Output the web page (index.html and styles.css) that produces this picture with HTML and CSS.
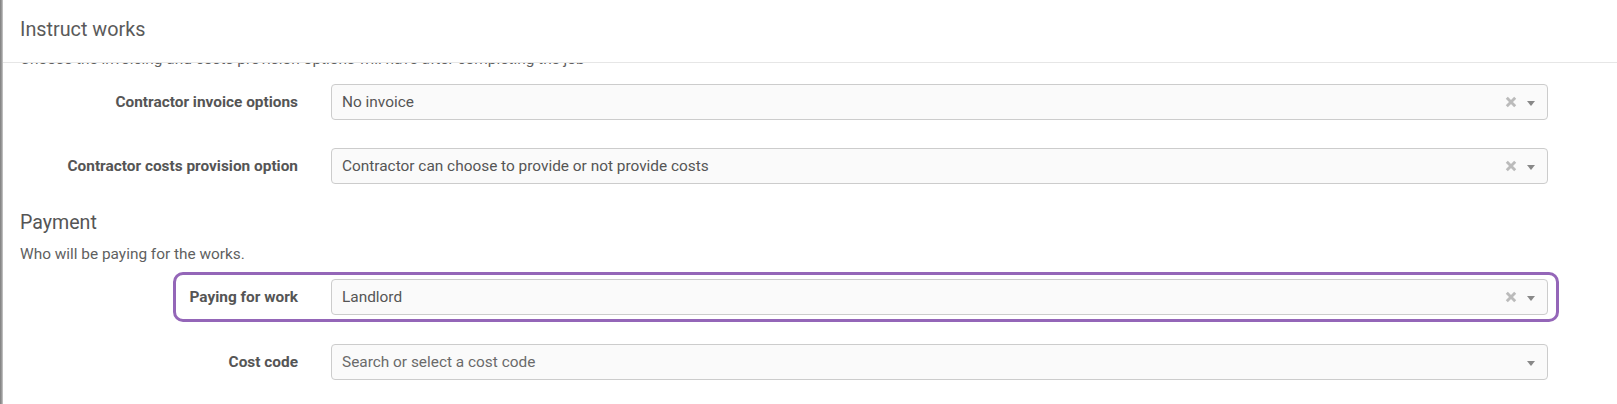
FILE: index.html
```html
<!DOCTYPE html>
<html lang="en">
<head>
<meta charset="utf-8">
<title>Instruct works</title>
<link rel="stylesheet" href="styles.css">
</head>
<body>
<div class="frame">
  <div class="edge"></div>
  <div class="modal">
    <header class="modal-header">
      <h2 class="modal-title">Instruct works</h2>
    </header>
    <div class="modal-body">
      <p class="desc desc-clipped">Choose the invoicing and costs provision options will have after completing the job</p>

      <div class="field">
        <label class="field-label">Contractor invoice options</label>
        <div class="select">
          <span class="select-value">No invoice</span>
          <svg class="select-clear" viewBox="0 0 10 10" width="12" height="12"><path d="M1.5 1.5 L8.5 8.5 M8.5 1.5 L1.5 8.5"/></svg>
          <span class="select-arrow"></span>
        </div>
      </div>

      <div class="field">
        <label class="field-label">Contractor costs provision option</label>
        <div class="select">
          <span class="select-value">Contractor can choose to provide or not provide costs</span>
          <svg class="select-clear" viewBox="0 0 10 10" width="12" height="12"><path d="M1.5 1.5 L8.5 8.5 M8.5 1.5 L1.5 8.5"/></svg>
          <span class="select-arrow"></span>
        </div>
      </div>

      <h3 class="section-title">Payment</h3>
      <p class="desc desc-section">Who will be paying for the works.</p>

      <div class="field field-highlight">
        <label class="field-label">Paying for work</label>
        <div class="select">
          <span class="select-value">Landlord</span>
          <svg class="select-clear" viewBox="0 0 10 10" width="12" height="12"><path d="M1.5 1.5 L8.5 8.5 M8.5 1.5 L1.5 8.5"/></svg>
          <span class="select-arrow"></span>
        </div>
      </div>

      <div class="field">
        <label class="field-label">Cost code</label>
        <div class="select">
          <span class="select-value placeholder">Search or select a cost code</span>
          <span class="select-arrow"></span>
        </div>
      </div>
    </div>
  </div>
</div>
</body>
</html>
```

FILE: styles.css
```css
html, body {
  margin: 0;
  padding: 0;
  background: #ffffff;
}

body {
  font-family: Roboto, "Liberation Sans", Arial, sans-serif;
  color: #555555;
}

.frame {
  display: flex;
  height: 404px;
  overflow: hidden;
}

.edge {
  width: 3px;
  flex: none;
  background: linear-gradient(to right, #7d7d7d, #a6a6a6 70%, #d8d8d8);
}

.modal {
  flex: 1;
  display: flex;
  flex-direction: column;
  min-width: 0;
}

.modal-header {
  height: 63px;
  box-sizing: border-box;
  border-bottom: 1px solid #e6e6e6;
  display: flex;
  align-items: center;
  padding: 0 17px;
  flex: none;
  position: relative;
  z-index: 1;
  background: #fff;
}

.modal-title {
  margin: 0 0 3px;
  font-size: 19.8px;
  font-weight: 400;
  color: #5a5a5a;
}

.modal-body {
  flex: 1;
  overflow: hidden;
  padding: 0 69px 0 17px;
}

.desc {
  margin: 0;
  font-size: 15.4px;
  line-height: 20px;
  color: #5f5f5f;
}

.desc-clipped {
  margin-top: -14px;
  margin-bottom: 15px;
}

.desc-section {
  margin-top: 10px;
  margin-bottom: 15px;
}

.field {
  display: grid;
  grid-template-columns: 278px 1fr;
  column-gap: 33px;
  align-items: center;
  margin-bottom: 28px;
}

.field-label {
  text-align: right;
  font-size: 15.4px;
  font-weight: 700;
  color: #555555;
}

.select {
  height: 36px;
  box-sizing: border-box;
  border: 1px solid #cccccc;
  border-radius: 4px;
  background: #fafafa;
  display: flex;
  align-items: center;
  padding: 0 12px 0 10px;
}

.select-value {
  flex: 1;
  font-size: 15.4px;
  color: #555555;
  white-space: nowrap;
  overflow: hidden;
}

.select-value.placeholder {
  color: #6a6a6a;
}

.select-clear {
  flex: none;
  margin-right: 10px;
  stroke: #bbbbbb;
  stroke-width: 2.4;
  fill: none;
}

.select-arrow {
  flex: none;
  width: 0;
  height: 0;
  border-left: 4.5px solid transparent;
  border-right: 4.5px solid transparent;
  border-top: 5px solid #888888;
  margin-top: 2px;
}

.section-title {
  margin: 0;
  font-size: 19.6px;
  font-weight: 400;
  line-height: 22px;
  color: #555555;
}

.field-highlight {
  position: relative;
  margin-bottom: 29px;
}

.field-highlight::after {
  content: "";
  position: absolute;
  top: -7px;
  bottom: -7px;
  left: 153px;
  right: -11px;
  border: 3px solid #9466b8;
  border-radius: 10px;
  pointer-events: none;
}
```
